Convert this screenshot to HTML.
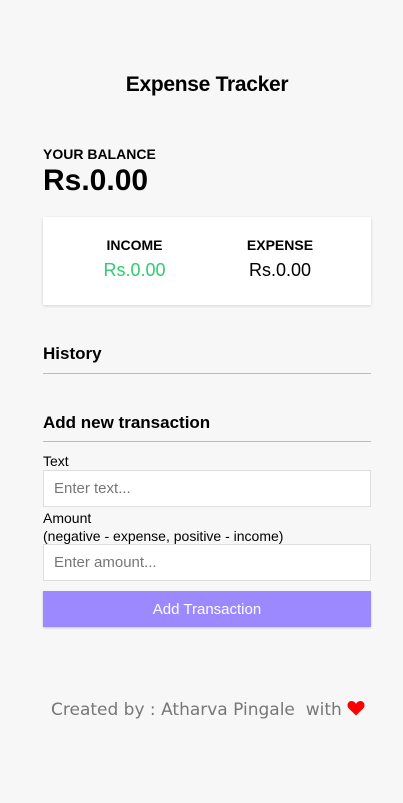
<!DOCTYPE html>
<html><head><style>
body{margin:0;background:#f7f7f7;font-family:"Liberation Sans",sans-serif;width:403px;height:803px;position:relative;overflow:hidden;color:#000}
.a{position:absolute;left:43px;width:328px}
input{box-sizing:border-box;border:1px solid #dedede;background:#fff;font:15px "Liberation Sans",sans-serif;padding:0 10px;color:#777;height:37px;width:328px;display:block}
input::placeholder{color:#777}
.line{position:absolute;left:43px;width:328px;height:1px;background:#bbb}
</style></head><body>
<div class="a" style="top:73px;text-align:center;font-size:21px;font-weight:bold;letter-spacing:-0.3px">Expense Tracker</div>
<div class="a" style="top:146px;font-size:14px;font-weight:bold">YOUR BALANCE</div>
<div class="a" style="top:164px;font-size:30px;font-weight:bold">Rs.0.00</div>
<div class="a" style="top:217px;height:88px;background:#fff;box-shadow:0 1px 3px rgba(0,0,0,.15)">
 <div style="position:absolute;left:0;width:183px;top:20px;text-align:center;font-size:14px;font-weight:bold">INCOME</div>
 <div style="position:absolute;left:0;width:183px;top:43px;text-align:center;font-size:18px;color:#2ecc71">Rs.0.00</div>
 <div style="position:absolute;left:165px;width:144px;top:20px;text-align:center;font-size:14px;font-weight:bold">EXPENSE</div>
 <div style="position:absolute;left:165px;width:144px;top:43px;text-align:center;font-size:18px">Rs.0.00</div>
</div>
<div class="a" style="top:344px;font-size:17px;font-weight:bold">History</div>
<div class="line" style="top:373px"></div>
<div class="a" style="top:413px;font-size:17px;font-weight:bold">Add new transaction</div>
<div class="line" style="top:441px"></div>
<div class="a" style="top:453px;font-size:14px">Text</div>
<div class="a" style="top:470px"><input placeholder="Enter text..."></div>
<div class="a" style="top:509px;font-size:14px;line-height:18px">Amount<br>(negative - expense, positive - income)</div>
<div class="a" style="top:544px"><input placeholder="Enter amount..."></div>
<div class="a" style="top:591px;height:36px;background:#9c88ff;color:#fff;font-size:15px;text-align:center;line-height:37px;box-shadow:0 1px 2px rgba(0,0,0,.2)">Add Transaction</div>
<div style="position:absolute;left:51px;top:700px;white-space:nowrap;font:17px 'DejaVu Sans',sans-serif;color:#777">Created by : Atharva Pingale &nbsp;with <svg width="18" height="16" viewBox="0 0 18 16" style="vertical-align:-1px"><path d="M9 15.5 L1.6 8.2 C-0.6 5.8 0.6 1 4.6 1 C6.6 1 8 2.4 9 3.8 C10 2.4 11.4 1 13.4 1 C17.4 1 18.6 5.8 16.4 8.2 Z" fill="#f00"/></svg></div>
</body></html>
